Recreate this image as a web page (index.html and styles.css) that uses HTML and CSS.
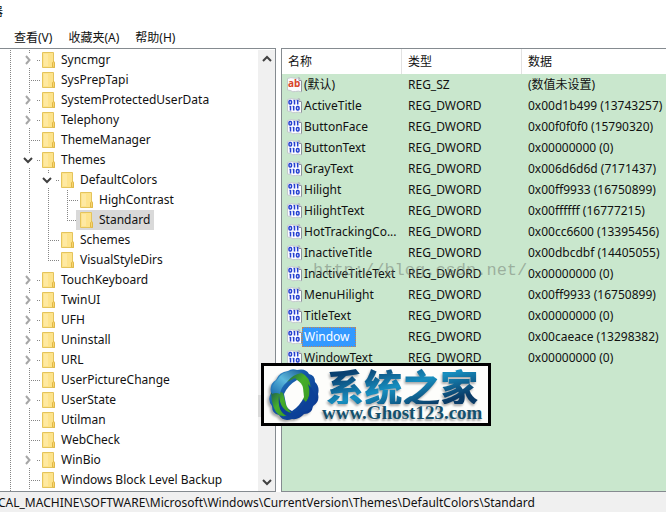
FILE: index.html
```html
<!DOCTYPE html>
<html lang="zh-CN">
<head>
<meta charset="utf-8">
<title>注册表编辑器</title>
<link rel="stylesheet" href="styles.css">
</head>
<body>
<svg class="defs" aria-hidden="true">
  <symbol id="folder" viewBox="0 0 13 16">
    <path d="M.5.5h11v9.500l1 1v4.500H.5z" fill="#fde38c" stroke="#e4c45c"/>
    <path d="M2 2h4v12H2z" fill="#fee9a2"/>
    <path d="M10.500 15V10.500L12 9.500l.5 1v5z" fill="#f8d774" stroke="#e0b848"/>
  </symbol>
  <symbol id="right" viewBox="0 0 8 10"><path d="M2 1l3.500 4L2 9" fill="none" stroke="#a6a6a6" stroke-width="2"/></symbol>
  <symbol id="down" viewBox="0 0 10 8"><path d="M1 2l4 4 4-4" fill="none" stroke="#404040" stroke-width="2"/></symbol>
  <symbol id="page" viewBox="0 0 15 16">
    <path d="M.5 1.500Q4 0 7 1t5-.5l2.500 3V15q-3-1.500-6-.5t-5-1l-3-.5z" fill="#fbfbff" stroke="#c3c9cc"/>
    <path d="M12 .5v3h2.500M14.500 4v10.500" fill="none" stroke="#8d9398"/>
  </symbol>
  <symbol id="string" viewBox="0 0 15 16">
    <use href="#page"/>
    <text x="1" y="10" class="ab">ab</text>
  </symbol>
  <symbol id="binary" viewBox="0 0 15 16">
    <use href="#page"/>
    <g fill="none" stroke="#2440d0" stroke-width="1.500">
      <rect x="2" y="2.500" width="2.500" height="3.500" rx="1"/>
      <path d="M7.500 2v4.500M10.700 2v4.500M6.500 2.500h1M9.700 2.500h1M3.500 8v4.500M6.700 8v4.500M2.500 8.500h1M5.700 8.500h1"/>
      <rect x="9.500" y="8.500" width="2.500" height="3.500" rx="1"/>
    </g>
  </symbol>
</svg>

<header class="titlebar"><span>器</span></header>
<nav class="menubar">
  <button type="button">查看(V)</button>
  <button type="button">收藏夹(A)</button>
  <button type="button">帮助(H)</button>
</nav>

<main class="panes">
  <section class="tree-pane" aria-label="Keys">
    <ul class="tree">
      <li><div class="row"><span class="twig"><button type="button" aria-label="Expand"><svg class="right"><use href="#right"/></svg></button></span><span class="item"><svg class="folder"><use href="#folder"/></svg>Syncmgr</span></div></li>
      <li><div class="row"><span class="twig"></span><span class="item"><svg class="folder"><use href="#folder"/></svg>SysPrepTapi</span></div></li>
      <li><div class="row"><span class="twig"><button type="button" aria-label="Expand"><svg class="right"><use href="#right"/></svg></button></span><span class="item"><svg class="folder"><use href="#folder"/></svg>SystemProtectedUserData</span></div></li>
      <li><div class="row"><span class="twig"><button type="button" aria-label="Expand"><svg class="right"><use href="#right"/></svg></button></span><span class="item"><svg class="folder"><use href="#folder"/></svg>Telephony</span></div></li>
      <li><div class="row"><span class="twig"></span><span class="item"><svg class="folder"><use href="#folder"/></svg>ThemeManager</span></div></li>
      <li><div class="row"><span class="twig"><button type="button" aria-label="Collapse"><svg class="down"><use href="#down"/></svg></button></span><span class="item"><svg class="folder"><use href="#folder"/></svg>Themes</span></div>
        <ul>
          <li><div class="row"><span class="twig"><button type="button" aria-label="Collapse"><svg class="down"><use href="#down"/></svg></button></span><span class="item"><svg class="folder"><use href="#folder"/></svg>DefaultColors</span></div>
            <ul>
              <li><div class="row"><span class="twig"></span><span class="item"><svg class="folder"><use href="#folder"/></svg>HighContrast</span></div></li>
              <li><div class="row"><span class="twig"></span><span class="item selected"><svg class="folder"><use href="#folder"/></svg>Standard</span></div></li>
            </ul>
          </li>
          <li><div class="row"><span class="twig"></span><span class="item"><svg class="folder"><use href="#folder"/></svg>Schemes</span></div></li>
          <li><div class="row"><span class="twig"></span><span class="item"><svg class="folder"><use href="#folder"/></svg>VisualStyleDirs</span></div></li>
        </ul>
      </li>
      <li><div class="row"><span class="twig"><button type="button" aria-label="Expand"><svg class="right"><use href="#right"/></svg></button></span><span class="item"><svg class="folder"><use href="#folder"/></svg>TouchKeyboard</span></div></li>
      <li><div class="row"><span class="twig"><button type="button" aria-label="Expand"><svg class="right"><use href="#right"/></svg></button></span><span class="item"><svg class="folder"><use href="#folder"/></svg>TwinUI</span></div></li>
      <li><div class="row"><span class="twig"><button type="button" aria-label="Expand"><svg class="right"><use href="#right"/></svg></button></span><span class="item"><svg class="folder"><use href="#folder"/></svg>UFH</span></div></li>
      <li><div class="row"><span class="twig"><button type="button" aria-label="Expand"><svg class="right"><use href="#right"/></svg></button></span><span class="item"><svg class="folder"><use href="#folder"/></svg>Uninstall</span></div></li>
      <li><div class="row"><span class="twig"><button type="button" aria-label="Expand"><svg class="right"><use href="#right"/></svg></button></span><span class="item"><svg class="folder"><use href="#folder"/></svg>URL</span></div></li>
      <li><div class="row"><span class="twig"></span><span class="item"><svg class="folder"><use href="#folder"/></svg>UserPictureChange</span></div></li>
      <li><div class="row"><span class="twig"><button type="button" aria-label="Expand"><svg class="right"><use href="#right"/></svg></button></span><span class="item"><svg class="folder"><use href="#folder"/></svg>UserState</span></div></li>
      <li><div class="row"><span class="twig"></span><span class="item"><svg class="folder"><use href="#folder"/></svg>Utilman</span></div></li>
      <li><div class="row"><span class="twig"></span><span class="item"><svg class="folder"><use href="#folder"/></svg>WebCheck</span></div></li>
      <li><div class="row"><span class="twig"><button type="button" aria-label="Expand"><svg class="right"><use href="#right"/></svg></button></span><span class="item"><svg class="folder"><use href="#folder"/></svg>WinBio</span></div></li>
      <li><div class="row"><span class="twig"></span><span class="item"><svg class="folder"><use href="#folder"/></svg>Windows Block Level Backup</span></div></li>
    </ul>
    <div class="scrollbar">
      <button type="button" aria-label="Scroll up"><svg class="down up"><use href="#down"/></svg></button>
      <div class="track"><div class="thumb"></div></div>
      <button type="button" aria-label="Scroll down"><svg class="down"><use href="#down"/></svg></button>
    </div>
  </section>

  <section class="value-pane" aria-label="Values">
    <table>
      <colgroup><col class="name-col"><col class="type-col"><col></colgroup>
      <thead><tr><th>名称</th><th>类型</th><th>数据</th></tr></thead>
      <tbody>
        <tr><td><div class="name"><svg class="icon"><use href="#string"/></svg><span>(默认)</span></div></td><td>REG_SZ</td><td>(数值未设置)</td></tr>
        <tr><td><div class="name"><svg class="icon"><use href="#binary"/></svg><span>ActiveTitle</span></div></td><td>REG_DWORD</td><td>0x00d1b499 (13743257)</td></tr>
        <tr><td><div class="name"><svg class="icon"><use href="#binary"/></svg><span>ButtonFace</span></div></td><td>REG_DWORD</td><td>0x00f0f0f0 (15790320)</td></tr>
        <tr><td><div class="name"><svg class="icon"><use href="#binary"/></svg><span>ButtonText</span></div></td><td>REG_DWORD</td><td>0x00000000 (0)</td></tr>
        <tr><td><div class="name"><svg class="icon"><use href="#binary"/></svg><span>GrayText</span></div></td><td>REG_DWORD</td><td>0x006d6d6d (7171437)</td></tr>
        <tr><td><div class="name"><svg class="icon"><use href="#binary"/></svg><span>Hilight</span></div></td><td>REG_DWORD</td><td>0x00ff9933 (16750899)</td></tr>
        <tr><td><div class="name"><svg class="icon"><use href="#binary"/></svg><span>HilightText</span></div></td><td>REG_DWORD</td><td>0x00ffffff (16777215)</td></tr>
        <tr><td><div class="name"><svg class="icon"><use href="#binary"/></svg><span>HotTrackingCo...</span></div></td><td>REG_DWORD</td><td>0x00cc6600 (13395456)</td></tr>
        <tr><td><div class="name"><svg class="icon"><use href="#binary"/></svg><span>InactiveTitle</span></div></td><td>REG_DWORD</td><td>0x00dbcdbf (14405055)</td></tr>
        <tr><td><div class="name"><svg class="icon"><use href="#binary"/></svg><span>InactiveTitleText</span></div></td><td>REG_DWORD</td><td>0x00000000 (0)</td></tr>
        <tr><td><div class="name"><svg class="icon"><use href="#binary"/></svg><span>MenuHilight</span></div></td><td>REG_DWORD</td><td>0x00ff9933 (16750899)</td></tr>
        <tr><td><div class="name"><svg class="icon"><use href="#binary"/></svg><span>TitleText</span></div></td><td>REG_DWORD</td><td>0x00000000 (0)</td></tr>
        <tr><td><div class="name"><svg class="icon"><use href="#binary"/></svg><span class="active">Window</span></div></td><td>REG_DWORD</td><td>0x00caeace (13298382)</td></tr>
        <tr><td><div class="name"><svg class="icon"><use href="#binary"/></svg><span>WindowText</span></div></td><td>REG_DWORD</td><td>0x00000000 (0)</td></tr>
      </tbody>
    </table>
    <div class="watermark">http://blog.csdn.net/</div>
  </section>
</main>

<footer class="statusbar"><span>CAL_MACHINE\SOFTWARE\Microsoft\Windows\CurrentVersion\Themes\DefaultColors\Standard</span></footer>

<aside class="brand">
  <svg class="ring" viewBox="0 0 52 54" aria-hidden="true">
    <defs>
      <linearGradient id="blue" x1="0" y1="0" x2="1" y2="1"><stop offset="0" stop-color="#3b9cd2"/><stop offset=".4" stop-color="#1458a8"/><stop offset="1" stop-color="#082c88"/></linearGradient>
      <linearGradient id="green" x1="0" y1="0" x2="1" y2="1"><stop offset="0" stop-color="#1c5a50"/><stop offset=".45" stop-color="#46ae2a"/><stop offset="1" stop-color="#3a9a24"/></linearGradient>
      <linearGradient id="sky" x1="0" y1="1" x2="1" y2="0"><stop offset="0" stop-color="#1c6fb0"/><stop offset=".5" stop-color="#5bb8dc"/><stop offset="1" stop-color="#1d5f98"/></linearGradient>
    </defs>
    <path d="M20 3q4-3 9-1 9-2 12 4 6 1 6 8 5 5 3 12 2 8-5 12-1 8-9 8-5 6-12 5-9 3-13-4-7-1-7-9-5-6-1-13-2-9 5-13 3-8 12-9z" fill="url(#blue)"/>
    <path d="M29 4q10 1 13 11 2 11-4 19l-4-4-1-14-6-6-8 4q3-8 10-10z" fill="url(#green)"/>
    <path d="M3 25q6-4 12 0l3 12 5 8q-5 5-12 2-7-5-8-22z" fill="url(#green)"/>
    <path d="M4 26Q3 16 9 12q4-8 14-9 7-2 11 2-9 1-15 9-6 5-7 12-4-2-8 0z" fill="url(#sky)"/>
    <path d="M11 27q1 15 12 18 9-1 14-9 7-9 3-20 8 8 7 17-2 10-13 11-7 6-15 4-10-4-8-21z" fill="#0c4098"/>
    <path d="M29 12q5 3 6 8l1 9q-4 9-12 14-5-2-6-7l-2-10q4-9 13-14z" fill="#fdfdfb"/>
  </svg>
  <div class="words">
    <strong class="brand-name">系统之家</strong>
    <span class="brand-url">www.Ghost123.com</span>
  </div>
</aside>
</body>
</html>
```
FILE: styles.css
```css
* { box-sizing: border-box; }

body {
  margin: 0;
  min-height: 100vh;
  display: flex;
  flex-direction: column;
  position: relative;
  overflow: hidden;
  background: #fff;
  color: #111;
  font: 12px/20px "Noto Sans", "Noto Sans CJK SC", sans-serif;
}

button {
  border: 0;
  padding: 0;
  background: none;
  color: inherit;
  font: inherit;
}

ul { list-style: none; margin: 0; padding: 0; }
svg { display: block; flex: none; }
.defs { position: absolute; width: 0; height: 0; }
.ab { font: bold 10px "Noto Sans", sans-serif; fill: #d8452c; }

.titlebar { height: 28px; padding-top: 2px; }
.titlebar span { margin-left: -9px; }

.menubar {
  display: flex;
  gap: 16px;
  height: 20px;
  padding-left: 14px;
}

.panes {
  flex: 1;
  display: grid;
  grid-template-columns: 276px minmax(0, 1fr);
  gap: 5px;
}

.tree-pane {
  display: flex;
  border: solid #858b90;
  border-width: 1px 1px 1px 0;
  padding-top: 1px;
}

.tree {
  flex: 1;
  padding-left: 20px;
  background: repeating-linear-gradient(#858585 0 1px, transparent 1px 2px) 10px 0 / 1px 100% no-repeat;
}

.tree ul { padding-left: 19px; }

.tree li {
  background: repeating-linear-gradient(#858585 0 1px, transparent 1px 2px) 9px 0 / 1px 100% no-repeat;
}

.tree ul li:last-child { background-size: 1px 10px; }

.row { display: flex; height: 20px; white-space: nowrap; }

.twig {
  display: flex;
  align-items: center;
  width: 20px;
  background: repeating-linear-gradient(90deg, #858585 0 1px, transparent 1px 2px) 9px 10px / 11px 1px no-repeat;
}

.twig button {
  display: flex;
  justify-content: center;
  align-items: center;
  width: 16px;
  height: 14px;
  background: #fff;
}

.right { width: 8px; height: 10px; }
.down { width: 10px; height: 8px; }
.up { transform: rotate(180deg); }

.item { display: flex; align-items: center; gap: 6px; padding: 0 4px 0 2px; }
.selected { margin-left: -2px; padding-left: 4px; background: #d9d9d9; }
.folder { width: 13px; height: 16px; }

.scrollbar {
  display: flex;
  flex-direction: column;
  width: 17px;
  background: #f0f0f0;
}

.scrollbar button {
  display: flex;
  justify-content: center;
  align-items: center;
  height: 18px;
}

.track { flex: 1; display: flex; flex-direction: column; justify-content: flex-end; }
.thumb { height: 22px; margin-bottom: 56px; background: #dadada; }

.value-pane {
  position: relative;
  border: solid #858b90;
  border-width: 1px 0 1px 1px;
  background: #c9e7cd;
  overflow: hidden;
}

table {
  width: 100%;
  table-layout: fixed;
  border-collapse: separate;
  border-spacing: 0;
  white-space: nowrap;
}

.name-col, .type-col { width: 120px; }

th {
  height: 25px;
  padding: 0 6px;
  background: #fff;
  border-right: 1px solid #e2e2e2;
  font-weight: normal;
  text-align: left;
}

th:last-child { border-right: 0; }
td { height: 21px; padding: 0 0 0 6px; }
td:first-child { padding-left: 5px; }
.name { display: flex; align-items: center; }
.name span { padding: 0 2px; }
.icon { width: 15px; height: 16px; }
.name .active { padding-right: 6px; background: #3399ff; color: #fff; outline: 1px dotted #c88450; outline-offset: -1px; }

.watermark {
  position: absolute;
  left: 31px;
  top: 212px;
  color: rgba(110, 120, 110, .5);
  font: 17px/20px "Liberation Mono", monospace;
}

.statusbar {
  height: 20px;
  line-height: 22px;
  background: #f0f0f0;
  overflow: hidden;
  white-space: nowrap;
}

.statusbar span { margin-left: -2px; }

.brand {
  position: absolute;
  left: 261px;
  top: 363px;
  display: flex;
  align-items: center;
  width: 230px;
  height: 63px;
  padding-left: 4px;
  gap: 2px;
  border: 3px solid #000;
  background: #fdfdfb;
}

.ring { width: 52px; height: 54px; filter: drop-shadow(-2px 2px 1px #aaa); }
.words { display: flex; flex-direction: column; align-items: center; }

.brand-name {
  background: linear-gradient(165deg, #0a4070 15%, #178fc0 50%, #0a3c68 85%);
  background-clip: text;
  color: transparent;
  font: 900 38px/37px "Noto Sans CJK SC", sans-serif;
  filter: drop-shadow(-1px 2px 1px #aaa);
}

.brand-url {
  color: #14506c;
  font: bold 19px/18px "Liberation Serif", serif;
  text-shadow: -1px 2px 2px #aaa;
}
```
